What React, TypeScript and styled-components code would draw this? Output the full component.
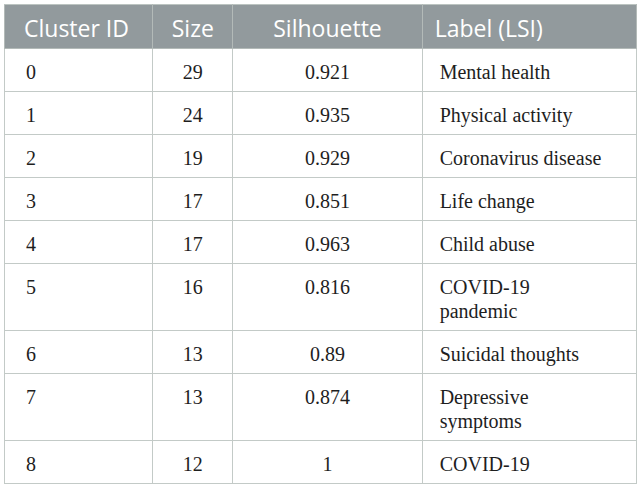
import React from "react";
import styled, { createGlobalStyle } from "styled-components";

const Global = createGlobalStyle`
  html, body { margin: 0; padding: 0; background: #ffffff; }
`;

const Page = styled.div`
  padding: 4px 5px 4px 4px;
`;

const Table = styled.table`
  border-collapse: collapse;
  table-layout: fixed;
  width: 633px;
  border: 1px solid #bcc4c1;
`;

const HeadCell = styled.th<{ $align: string; $pad: number }>`
  background: #929a9d;
  color: #ffffff;
  font-family: "Open Sans", "Noto Sans", sans-serif;
  font-weight: 400;
  font-size: 23px;
  line-height: 24px;
  text-align: ${(p) => p.$align};
  padding: 11px ${(p) => p.$pad}px 8px ${(p) => p.$pad}px;
  border: 1px solid #b3bab8;
  border-top: 1px solid #bcc4c1;
  white-space: nowrap;
`;

const Cell = styled.td<{ $align: string; $pad: number }>`
  font-family: "Liberation Serif", "Times New Roman", serif;
  font-size: 20px;
  line-height: 24px;
  color: #1e1e1e;
  text-align: ${(p) => p.$align};
  vertical-align: top;
  padding: 11px ${(p) => p.$pad}px 7px ${(p) => p.$pad}px;
  border: 1px solid #c3cac7;
`;

type Row = { id: string; size: string; sil: string; label: React.ReactNode };

const rows: Row[] = [
  { id: "0", size: "29", sil: "0.921", label: "Mental health" },
  { id: "1", size: "24", sil: "0.935", label: "Physical activity" },
  { id: "2", size: "19", sil: "0.929", label: "Coronavirus disease" },
  { id: "3", size: "17", sil: "0.851", label: "Life change" },
  { id: "4", size: "17", sil: "0.963", label: "Child abuse" },
  { id: "5", size: "16", sil: "0.816", label: <>COVID-19<br />pandemic</> },
  { id: "6", size: "13", sil: "0.89", label: "Suicidal thoughts" },
  { id: "7", size: "13", sil: "0.874", label: <>Depressive<br />symptoms</> },
  { id: "8", size: "12", sil: "1", label: "COVID-19" },
];

export default function App() {
  return (
    <Page>
      <Global />
      <Table>
        <colgroup>
          <col style={{ width: 148 }} />
          <col style={{ width: 80 }} />
          <col style={{ width: 189 }} />
          <col style={{ width: 214 }} />
        </colgroup>
        <thead>
          <tr>
            <HeadCell $align="left" $pad={19}>Cluster ID</HeadCell>
            <HeadCell $align="center" $pad={2}>Size</HeadCell>
            <HeadCell $align="center" $pad={2}>Silhouette</HeadCell>
            <HeadCell $align="left" $pad={12}>Label (LSI)</HeadCell>
          </tr>
        </thead>
        <tbody>
          {rows.map((r) => (
            <tr key={r.id}>
              <Cell $align="left" $pad={21}>{r.id}</Cell>
              <Cell $align="center" $pad={4}>{r.size}</Cell>
              <Cell $align="center" $pad={4}>{r.sil}</Cell>
              <Cell $align="left" $pad={17}>{r.label}</Cell>
            </tr>
          ))}
        </tbody>
      </Table>
    </Page>
  );
}
